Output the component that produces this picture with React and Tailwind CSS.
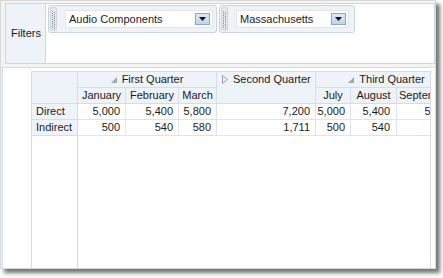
import React from "react";

const font = { fontFamily: '"Liberation Sans", Arial, sans-serif' };

function Gripper() {
  const dots = [];
  for (let i = 0; i < 9; i++) {
    dots.push(<rect key={"a" + i} x="1" y={1 + i * 2} width="1" height="1" fill="#8a8a8a" />);
    dots.push(<rect key={"b" + i} x="3" y={2 + i * 2} width="1" height="1" fill="#8a8a8a" />);
  }
  return (
    <div className="w-[7px] h-[24px] ml-[1px] mt-[1px] rounded-[2px] bg-[#e4e7ec] border border-[#d0d6de] flex items-center justify-center">
      <svg width="5" height="19" viewBox="0 0 5 19">{dots}</svg>
    </div>
  );
}

function DropBtn() {
  return (
    <div className="w-[15px] h-[12px] border border-[#86aad6] bg-gradient-to-b from-[#dde9f8] to-[#bcd3f0] flex items-center justify-center">
      <svg width="7" height="4" viewBox="0 0 7 4"><polygon points="0,0 7,0 3.5,4" fill="#111" /></svg>
    </div>
  );
}

function Chip({ label, width, inputWidth }) {
  return (
    <div className="h-[28px] rounded-[3px] border border-[#cbd3de] bg-[#eff2f6] flex items-start" style={{ width }}>
      <Gripper />
      <div className="ml-[8px] mt-[4px] h-[18px] bg-white border border-[#e1e6ec] flex items-center justify-between pl-[3px] pr-[2px]" style={{ width: inputWidth }}>
        <span className="text-[11px] text-[#1b1b1b] leading-none">{label}</span>
        <DropBtn />
      </div>
    </div>
  );
}

function Expanded() {
  return (
    <svg width="6" height="6" viewBox="0 0 6 6" className="inline-block mr-[5px] mb-[1px]">
      <polygon points="6,0 6,6 0,6" fill="#a4a8ae" />
    </svg>
  );
}
function Collapsed() {
  return (
    <svg width="6" height="9" viewBox="0 0 6 9" className="inline-block mr-[5px] mb-[1px]">
      <polygon points="0.5,0.5 5.5,4.5 0.5,8.5" fill="none" stroke="#9aa0a8" strokeWidth="1" />
    </svg>
  );
}

const hd = "bg-[#eef2f9] border border-[#d6dde7] text-center font-normal px-[2px] whitespace-nowrap overflow-hidden";
const rh = "bg-[#f0f3f9] border border-[#d6dde7] text-left pl-[4px] font-normal whitespace-nowrap";
const td = "bg-white border border-[#e0e4ea] text-right pr-[5px] whitespace-nowrap";

export default function App() {
  return (
    <div className="w-[443px] h-[278px] bg-white relative" style={font}>
      <div className="w-[436px] h-[269px] bg-[#f3f3f3] border border-[#d8d8d8] shadow-[4px_4px_4px_rgba(0,0,0,0.55)] flex flex-col text-[#1b1b1b]">
        <div className="ml-[4px] mt-[2px] w-[430px] h-[61px] border border-[#cdd6e2] flex shrink-0">
          <div className="w-[40px] bg-[#eef2f9] border-r border-[#cdd6e2] flex items-center pl-[5px] text-[11px]">Filters</div>
          <div className="flex-1 bg-white flex items-start pt-[1px] pl-[2px] gap-[2px]">
            <Chip label="Audio Components" width={169} inputWidth={148} />
            <Chip label="Massachusetts" width={136} inputWidth={113} />
          </div>
        </div>
        <div className="mt-[3px] ml-[1px] flex-1 bg-white border-t border-l border-[#d3dbe5] pt-[3px] pl-[28px] pr-[4px] flex overflow-hidden">
          <div className="w-[400px] h-full overflow-hidden border-r border-[#d6dde7]">
            <table className="table-fixed border-collapse text-[11px] leading-none" style={{ width: 426 }}>
              <colgroup>
                <col style={{ width: 46 }} />
                <col style={{ width: 48 }} />
                <col style={{ width: 53 }} />
                <col style={{ width: 38 }} />
                <col style={{ width: 99 }} />
                <col style={{ width: 35 }} />
                <col style={{ width: 46 }} />
                <col style={{ width: 61 }} />
              </colgroup>
              <tbody>
                <tr className="h-[16px]">
                  <td rowSpan={2} className="bg-[#eef2f9] border border-[#d6dde7]"></td>
                  <td colSpan={3} className={hd}><Expanded />First Quarter</td>
                  <td rowSpan={2} className="bg-[#eef2f9] border border-[#d6dde7] align-top text-left pl-[5px] pt-[2px] whitespace-nowrap"><Collapsed />Second Quarter</td>
                  <td colSpan={3} className={hd}><Expanded />Third Quarter</td>
                </tr>
                <tr className="h-[16px]">
                  <td className={hd}>January</td>
                  <td className={hd}>February</td>
                  <td className={hd}>March</td>
                  <td className={hd}>July</td>
                  <td className={hd}>August</td>
                  <td className={hd + " text-left pl-[2px]"}>September</td>
                </tr>
                <tr className="h-[16px]">
                  <td className={rh}>Direct</td>
                  <td className={td}>5,000</td>
                  <td className={td}>5,400</td>
                  <td className={td}>5,800</td>
                  <td className={td}>7,200</td>
                  <td className={td + " pr-[3px]"}>5,000</td>
                  <td className={td + " pr-[6px]"}>5,400</td>
                  <td className={td}>5,800</td>
                </tr>
                <tr className="h-[16px]">
                  <td className={rh}>Indirect</td>
                  <td className={td}>500</td>
                  <td className={td}>540</td>
                  <td className={td}>580</td>
                  <td className={td}>1,711</td>
                  <td className={td + " pr-[3px]"}>500</td>
                  <td className={td + " pr-[6px]"}>540</td>
                  <td className={td}></td>
                </tr>
                <tr style={{ height: 140 }}>
                  <td className="bg-white border-l border-r border-t border-[#d6dde7]"></td>
                  <td colSpan={7} className="border-t border-[#e0e4ea]"></td>
                </tr>
              </tbody>
            </table>
          </div>
        </div>
      </div>
    </div>
  );
}
